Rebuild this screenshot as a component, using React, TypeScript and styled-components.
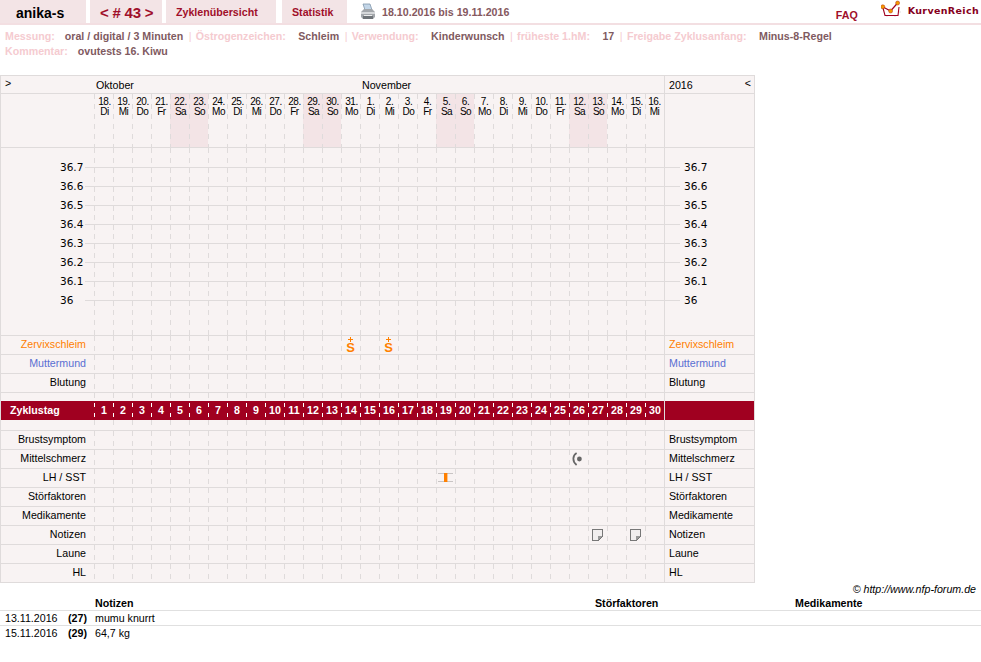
import styled, { createGlobalStyle } from "styled-components";

const GlobalStyle = createGlobalStyle`
  html, body {
    margin: 0;
    background: #fff;
    font-family: "Liberation Sans", Arial, sans-serif;
    font-size: 10.67px;
    color: #000;
  }
`;

const dash = "linear-gradient(#dfdbdb 5px, transparent 5px)";

const days: [string, string][] = [
  ["18.", "Di"], ["19.", "Mi"], ["20.", "Do"], ["21.", "Fr"], ["22.", "Sa"], ["23.", "So"],
  ["24.", "Mo"], ["25.", "Di"], ["26.", "Mi"], ["27.", "Do"], ["28.", "Fr"], ["29.", "Sa"],
  ["30.", "So"], ["31.", "Mo"], ["1.", "Di"], ["2.", "Mi"], ["3.", "Do"], ["4.", "Fr"],
  ["5.", "Sa"], ["6.", "So"], ["7.", "Mo"], ["8.", "Di"], ["9.", "Mi"], ["10.", "Do"],
  ["11.", "Fr"], ["12.", "Sa"], ["13.", "So"], ["14.", "Mo"], ["15.", "Di"], ["16.", "Mi"],
];

const temps = ["36.7", "36.6", "36.5", "36.4", "36.3", "36.2", "36.1", "36"];
const dayIndexes = Array.from({ length: 30 }, (_, i) => i);

const PrinterIcon = () => (
  <svg width="16" height="18" viewBox="0 0 16 18">
    <path d="M3 1h7l2 6H5z" fill="#c3d6e8" stroke="#8197ab" strokeWidth="0.8" />
    <path d="M1 9l3-3h8l3 3v5l-2 2H3l-2-2z" fill="#a3a7ab" />
    <path d="M1 9h14v2H1z" fill="#d6d8da" />
    <path d="M3 13h10v3H3z" fill="#6f7478" />
    <path d="M4 12h8v1H4z" fill="#eceded" />
  </svg>
);

const LogoIcon = () => (
  <svg width="20" height="17" viewBox="0 0 20 17">
    <path d="M0 8h2M16 12h4M6 16v1M14 16v1" stroke="#ddd" strokeWidth="1" />
    <path d="M2 8l2 7.5h13l1-8.5" fill="#fff" stroke="#a00020" strokeWidth="1.1" />
    <path d="M2 7l7.6 4L16.6 3" fill="none" stroke="#a00020" strokeWidth="1.2" />
    <circle cx="1.8" cy="6.8" r="2" fill="#f59a00" stroke="#b03010" strokeWidth="0.5" />
    <circle cx="9.6" cy="11" r="2" fill="#f59a00" stroke="#b03010" strokeWidth="0.5" />
    <circle cx="16.6" cy="3" r="2" fill="#f59a00" stroke="#b03010" strokeWidth="0.5" />
  </svg>
);

const PainIcon = () => (
  <svg width="14" height="14" viewBox="0 0 14 14">
    <path d="M4.6 1C.4 3.4.2 9.6 4.6 13" fill="none" stroke="#666" strokeWidth="1.8" />
    <circle cx="7.4" cy="7" r="2.4" fill="#666" />
  </svg>
);

const TestIcon = () => (
  <svg width="16" height="10" viewBox="0 0 16 10">
    <path d="M0 .5h15M0 8.5h15" stroke="#c8c4c4" strokeWidth="1" />
    <rect x="6" y="0" width="3.4" height="9" fill="#ff8000" />
  </svg>
);

const NoteIcon = () => (
  <svg width="11" height="12" viewBox="0 0 11 12" shapeRendering="crispEdges">
    <path d="M.5.5h10v7l-4 4h-6z" fill="#f1eeee" stroke="#777" strokeWidth="1" />
    <path d="M10 7H6v4z" fill="#999" />
  </svg>
);

const App = () => {
  const renderDays = (cell?: (i: number) => React.ReactNode) =>
    dayIndexes.map((i) => <DayCell key={i}>{cell && cell(i)}</DayCell>);

  const renderRow = (label: string, cell?: (i: number) => React.ReactNode, color?: string) => (
    <Row key={label}>
      <RowLabel $color={color}>{label}</RowLabel>
      {renderDays(cell)}
      <RowSide $color={color}>{label}</RowSide>
    </Row>
  );

  return (
    <Page>
      <GlobalStyle />
      <Header>
        <NameTab>anika-s</NameTab>
        <CycleTab>&lt; # 43 &gt;</CycleTab>
        <NavTab $width={110} $gap={4}>Zyklenübersicht</NavTab>
        <NavTab $width={65} $gap={6}>Statistik</NavTab>
        <PrintLink>
          <PrinterIcon />
        </PrintLink>
        <DateRange>18.10.2016 bis 19.11.2016</DateRange>
        <Faq>FAQ</Faq>
        <Logo>
          <LogoIcon />
          <LogoText>KurvenReich</LogoText>
        </Logo>
      </Header>

      <Meta>
        <MetaLine>
          <MetaLabel $gap={10}>Messung:</MetaLabel>
          <MetaValue>oral / digital / 3 Minuten</MetaValue>
          <MetaSep>|</MetaSep>
          <MetaLabel>Östrogenzeichen:</MetaLabel>
          <MetaValue>Schleim</MetaValue>
          <MetaSep>|</MetaSep>
          <MetaLabel>Verwendung:</MetaLabel>
          <MetaValue>Kinderwunsch</MetaValue>
          <MetaSep>|</MetaSep>
          <MetaLabel>früheste 1.hM:</MetaLabel>
          <MetaValue>17</MetaValue>
          <MetaSep>|</MetaSep>
          <MetaLabel>Freigabe Zyklusanfang:</MetaLabel>
          <MetaValue>Minus-8-Regel</MetaValue>
        </MetaLine>
        <MetaLine>
          <MetaLabel $gap={10}>Kommentar:</MetaLabel>
          <MetaValue>ovutests 16. Kiwu</MetaValue>
        </MetaLine>
      </Meta>

      <Chart>
        <MonthRow>
          <Toggle>&gt;</Toggle>
          <Month $span={14}>Oktober</Month>
          <Month $span={16}>November</Month>
          <YearCell>
            2016
            <span>&lt;</span>
          </YearCell>
        </MonthRow>

        <DateRow>
          <BlankLabel />
          {days.map(([date, name], i) => (
            <DateCell key={i} $weekend={name === "Sa" || name === "So"} $last={i === 29}>
              {date}
              <br />
              {name}
            </DateCell>
          ))}
          <Side />
        </DateRow>

        <TempArea>
          <Filler $height={10}>
            <BlankLabel />
            {renderDays()}
            <Side />
          </Filler>
          {temps.map((t) => (
            <TempRow key={t}>
              <TempLabel>{t}</TempLabel>
              {renderDays()}
              <TempSide>{t}</TempSide>
            </TempRow>
          ))}
          <Filler $height={25}>
            <BlankLabel />
            {renderDays()}
            <Side />
          </Filler>
        </TempArea>

        {renderRow(
          "Zervixschleim",
          (i) =>
            (i === 13 || i === 15) && (
              <MucusMark>
                <MucusPlus />
                <MucusLetter>S</MucusLetter>
              </MucusMark>
            ),
          "#ff8000",
        )}
        {renderRow("Muttermund", undefined, "#5a6fd2")}
        {renderRow("Blutung")}

        <Filler $height={8}>
          <BlankLabel />
          {renderDays()}
          <Side />
        </Filler>

        <CycleRow>
          <CycleLabel>Zyklustag</CycleLabel>
          {dayIndexes.map((i) => (
            <CycleDay key={i}>{i + 1}</CycleDay>
          ))}
          <CycleSide />
        </CycleRow>

        <Filler $height={11} $ruled>
          <BlankLabel />
          {renderDays()}
          <Side />
        </Filler>

        {renderRow("Brustsymptom")}
        {renderRow("Mittelschmerz", (i) => i === 25 && <PainIcon />)}
        {renderRow("LH / SST", (i) => i === 18 && <TestIcon />)}
        {renderRow("Störfaktoren")}
        {renderRow("Medikamente")}
        {renderRow("Notizen", (i) => (i === 26 || i === 28) && <NoteIcon />)}
        {renderRow("Laune")}
        {renderRow("HL")}
      </Chart>

      <Copyright>© http://www.nfp-forum.de</Copyright>

      <NotesHead>
        <span />
        <span />
        <span>Notizen</span>
        <span>Störfaktoren</span>
        <span>Medikamente</span>
      </NotesHead>
      <NotesRow $ruled>
        <span>13.11.2016</span>
        <b>(27)</b>
        <span>mumu knurrt</span>
      </NotesRow>
      <NotesRow>
        <span>15.11.2016</span>
        <b>(29)</b>
        <span>64,7 kg</span>
      </NotesRow>
    </Page>
  );
};

export default App;

const Page = styled.div`
  width: 981px;
  min-height: 662px;
`;

const Header = styled.header`
  display: flex;
  height: 23px;
  border-bottom: 2px solid #f3dfe2;
`;

const NameTab = styled.div`
  width: 86px;
  padding-left: 16px;
  box-sizing: border-box;
  background: #f3e4e6;
  font-size: 14px;
  font-weight: bold;
  line-height: 26px;
`;

const CycleTab = styled.div`
  width: 72px;
  margin-left: 4px;
  padding-left: 10px;
  box-sizing: border-box;
  background: #f3e4e6;
  color: #a00f2a;
  font-size: 15px;
  font-weight: bold;
  line-height: 26px;
  word-spacing: -0.5px;
`;

const NavTab = styled.div<{ $width: number; $gap: number }>`
  width: ${({ $width }) => $width}px;
  margin-left: ${({ $gap }) => $gap}px;
  padding-left: 10px;
  box-sizing: border-box;
  background: #f3e4e6;
  color: #a00f2a;
  font-weight: bold;
  line-height: 25px;
`;

const PrintLink = styled.div`
  margin-left: 13px;
  padding-top: 3px;
`;

const DateRange = styled.div`
  margin-left: 6px;
  color: #85585e;
  font-weight: bold;
  line-height: 25px;
`;

const Faq = styled.div`
  margin-left: auto;
  padding-top: 8px;
  color: #a00f2a;
  font-weight: bold;
  line-height: 14px;
`;

const Logo = styled.div`
  display: flex;
  margin-left: 23px;
  padding-right: 2px;
`;

const LogoText = styled.span`
  margin-left: 7px;
  color: #860020;
  font-family: "DejaVu Sans", sans-serif;
  font-size: 9.5px;
  font-weight: bold;
  letter-spacing: 0.35px;
  line-height: 21px;
`;

const Meta = styled.section`
  height: 50px;
  padding: 4px 0 0 5px;
  box-sizing: border-box;
`;

const MetaLine = styled.div`
  display: flex;
  font-weight: bold;
  line-height: 15px;
`;

const MetaLabel = styled.span<{ $gap?: number }>`
  margin-right: ${({ $gap }) => $gap ?? 12.5}px;
  color: #f5cbd0;
`;

const MetaValue = styled.span`
  margin-right: 5.5px;
  color: #7f5a5f;
`;

const MetaSep = styled.span`
  margin-right: 4.3px;
  color: #f5cbd0;
  font-weight: normal;
`;

const Chart = styled.section`
  width: 755px;
  box-sizing: border-box;
  border: 1px solid #dfdbdb;
  border-bottom: 0;
  background: #f8f3f3;
`;

const MonthRow = styled.div`
  display: flex;
  height: 17px;
  border-bottom: 1px solid #dfdbdb;
  line-height: 19px;
`;

const Toggle = styled.div`
  width: 93px;
  padding-left: 4px;
  box-sizing: border-box;
  line-height: 15px;
`;

const Month = styled.div<{ $span: number }>`
  width: ${({ $span }) => $span * 19}px;
  padding-left: 2px;
  box-sizing: border-box;
`;

const Side = styled.div`
  width: 90px;
  flex: none;
  padding-left: 4px;
  box-sizing: border-box;
  border-left: 1px solid #dfdbdb;
`;

const YearCell = styled(Side)`
  display: flex;
  justify-content: space-between;
  padding-right: 3px;

  span {
    line-height: 15px;
  }
`;

const BlankLabel = styled.div`
  width: 93px;
  flex: none;
`;

const DateRow = styled.div`
  display: flex;
  height: 53px;
  border-bottom: 1px solid #dfdbdb;
`;

const DateCell = styled.div<{ $weekend: boolean; $last: boolean }>`
  width: 19px;
  flex: none;
  box-sizing: border-box;
  padding: 3px 0 0 ${({ $last }) => ($last ? 0 : 2)}px;
  background: ${dash} left top / 1px 10px repeat-y;
  background-color: ${({ $weekend }) => ($weekend ? "#f3e4e6" : "transparent")};
  font-size: 10px;
  line-height: 10px;
  letter-spacing: -0.5px;
  text-align: center;
`;

const DayCell = styled.div`
  display: flex;
  width: 19px;
  flex: none;
  box-sizing: border-box;
  justify-content: center;
  align-items: center;
  background: ${dash} left top / 1px 10px repeat-y;
`;

const TempArea = styled.div`
  border-bottom: 1px solid #dfdbdb;
`;

const Filler = styled.div<{ $height: number; $ruled?: boolean }>`
  display: flex;
  height: ${({ $height, $ruled }) => $height - ($ruled ? 1 : 0)}px;
  border-bottom: ${({ $ruled }) => ($ruled ? "1px solid #dfdbdb" : "none")};
`;

const TempRow = styled.div`
  display: flex;
  height: 19px;
  background: linear-gradient(#dfdbdb, #dfdbdb) 84px 9px / 595px 1px no-repeat;
`;

const TempLabel = styled.div`
  width: 93px;
  flex: none;
  box-sizing: border-box;
  padding-left: 59px;
  font-family: "DejaVu Sans", sans-serif;
  font-size: 10.5px;
  line-height: 19px;
`;

const TempSide = styled(Side)`
  padding-left: 19px;
  font-family: "DejaVu Sans", sans-serif;
  font-size: 10.5px;
  line-height: 19px;
`;

const Row = styled.div`
  display: flex;
  height: 18px;
  border-bottom: 1px solid #dfdbdb;
  line-height: 17px;
`;

const RowLabel = styled.div<{ $color?: string }>`
  width: 93px;
  flex: none;
  box-sizing: border-box;
  padding-right: 8px;
  color: ${({ $color }) => $color ?? "#000"};
  text-align: right;
`;

const RowSide = styled(Side)<{ $color?: string }>`
  color: ${({ $color }) => $color ?? "#000"};
`;

const MucusMark = styled.div`
  display: flex;
  flex-direction: column;
  align-items: center;
  margin-top: -1px;
  color: #ff8000;
`;

const MucusPlus = styled.div`
  width: 5px;
  height: 5px;
  background:
    linear-gradient(#ff8000, #ff8000) center / 5px 1px no-repeat,
    linear-gradient(#ff8000, #ff8000) center / 1px 5px no-repeat;
`;

const MucusLetter = styled.span`
  font-size: 13px;
  font-weight: bold;
  line-height: 11px;
`;

const CycleRow = styled.div`
  display: flex;
  height: 19px;
  background: #a00020;
  color: #fff;
  font-weight: bold;
  line-height: 19px;
`;

const CycleLabel = styled.div`
  width: 93px;
  flex: none;
  box-sizing: border-box;
  padding-left: 9px;
`;

const CycleDay = styled.div`
  width: 19px;
  flex: none;
  box-sizing: border-box;
  padding-left: 1px;
  background: linear-gradient(#fff 4px, transparent 4px) left 2px / 1px 10px repeat-y;
  text-align: center;
`;

const CycleSide = styled.div`
  flex: 1;
  border-left: 1px solid #dfdbdb;
`;

const Copyright = styled.div`
  height: 13px;
  padding-right: 5px;
  font-style: italic;
  line-height: 13px;
  text-align: right;
`;

const NotesHead = styled.div`
  display: grid;
  grid-template-columns: 63px 27px 500px 200px auto;
  height: 14px;
  padding-left: 5px;
  border-bottom: 1px solid #e0e0e0;
  font-weight: bold;
  line-height: 15px;
`;

const NotesRow = styled.div<{ $ruled?: boolean }>`
  display: grid;
  grid-template-columns: 63px 27px 500px 200px auto;
  height: 14px;
  padding-left: 5px;
  border-bottom: ${({ $ruled }) => ($ruled ? "1px solid #e0e0e0" : "none")};
  line-height: 15px;
`;
